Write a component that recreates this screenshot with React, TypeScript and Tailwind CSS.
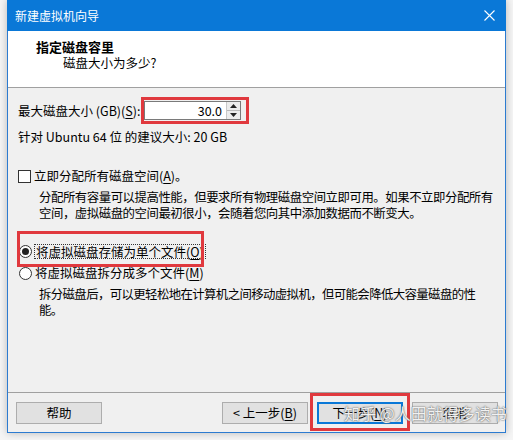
import React from "react";

// access-key letter, underlined like a Win32 dialog
const Key = ({ k }: { k: string }) => (
    <>
        (<span className="underline underline-offset-2">{k}</span>)
    </>
);

const Radio = ({ checked }: { checked?: boolean }) => (
    <span className="w-[13px] h-[13px] rounded-full border border-[#333] bg-white flex items-center justify-center shrink-0">
        {checked && <span className="w-[7px] h-[7px] rounded-full bg-[#222]" />}
    </span>
);

const WinButton = ({ children, primary }: { children: React.ReactNode; primary?: boolean }) => (
    <div
        className={`w-[86px] h-[22px] flex items-center justify-center bg-[#e1e1e1] ${
            primary ? "border-2 border-[#0a78d7]" : "border border-[#adadad]"
        }`}
    >
        {children}
    </div>
);

export default function App() {
    return (
        <div className="w-[513px] h-[440px] bg-[#f5f5f5] pl-[7px] overflow-hidden text-[12.5px] text-black font-['Noto_Sans_CJK_SC',sans-serif]">
            <div className="relative w-[499px] h-[433px] flex flex-col border-x border-b border-[#2c7bd0] bg-[#f0f0f0] shadow-[0_0_8px_rgba(0,0,0,0.25)]">
                {/* Title bar */}
                <div className="h-[31px] bg-[#0a78d7] flex items-center justify-between pl-[8px] pr-[10px] -mx-px">
                    <span className="text-white text-[12px] leading-none">新建虚拟机向导</span>
                    <svg width="11" height="11" viewBox="0 0 11 11" className="mr-[1px]">
                        <path d="M0.5 0.5 L10.5 10.5 M10.5 0.5 L0.5 10.5" stroke="white" strokeWidth="1.1" />
                    </svg>
                </div>

                {/* Header */}
                <div className="h-[57px] bg-white border-b border-[#a0a0a0] pt-[8px] leading-[16px]">
                    <div className="pl-[28px] font-bold text-[13px]">指定磁盘容里</div>
                    <div className="pl-[55px]">磁盘大小为多少?</div>
                </div>

                {/* Body */}
                <div className="flex-1 flex flex-col leading-[16px]">
                    <div className="flex items-center mt-[9px] pl-[10px]">
                        <span className="w-[123px] whitespace-nowrap">
                            最大磁盘大小 (GB)<Key k="S" />:
                        </span>
                        <div className="w-[108px] h-[27px] border-[3px] border-[#e0393e] pr-[5px] py-[1px]">
                            <div className="h-full flex border border-[#7a7a7a] bg-white">
                                <div className="flex-1 flex items-center justify-end pr-[4px]">30.0</div>
                                <div className="w-[14px] flex flex-col border-l border-[#c8c8c8]">
                                    <div className="flex-1 bg-[#ececec] border-b border-[#b8b8b8] flex items-center justify-center">
                                        <svg width="7" height="4" viewBox="0 0 7 4">
                                            <path d="M0 4 L3.5 0 L7 4 Z" fill="#222" />
                                        </svg>
                                    </div>
                                    <div className="flex-1 bg-[#ececec] flex items-center justify-center">
                                        <svg width="7" height="4" viewBox="0 0 7 4">
                                            <path d="M0 0 L3.5 4 L7 0 Z" fill="#222" />
                                        </svg>
                                    </div>
                                </div>
                            </div>
                        </div>
                    </div>

                    <div className="mt-[5px] pl-[10px]">针对 Ubuntu 64 位 的建议大小: 20 GB</div>

                    <div className="mt-[23px] pl-[10px] flex items-center gap-[3px] h-[16px]">
                        <span className="w-[13px] h-[13px] border border-[#333] bg-white shrink-0" />
                        <span>
                            立即分配所有磁盘空间<Key k="A" />。
                        </span>
                    </div>
                    <div className="mt-[5px] pl-[31px] text-[12.4px] tracking-[-0.45px] whitespace-nowrap">
                        分配所有容量可以提高性能，但要求所有物理磁盘空间立即可用。如果不立即分配所有
                        <br />
                        空间，虚拟磁盘的空间最初很小，会随着您向其中添加数据而不断变大。
                    </div>

                    <div className="relative mt-[22px] pl-[11px] flex items-center gap-[2px] h-[16px]">
                        <Radio checked />
                        <span className="border border-dotted border-[#333] px-[1px] leading-[13px]">
                            将虚拟磁盘存储为单个文件<Key k="O" />
                        </span>
                        <div className="absolute left-[9px] top-[-12px] w-[187px] h-[36px] border-[3px] border-[#e0393e]" />
                    </div>
                    <div className="mt-[6px] pl-[11px] flex items-center gap-[3px] h-[16px]">
                        <Radio />
                        <span>
                            将虚拟磁盘拆分成多个文件<Key k="M" />
                        </span>
                    </div>
                    <div className="mt-[5px] pl-[31px] text-[12.4px] tracking-[-0.6px] whitespace-nowrap">
                        拆分磁盘后，可以更轻松地在计算机之间移动虚拟机，但可能会降低大容量磁盘的性
                        <br />
                        能。
                    </div>
                </div>

                {/* Footer */}
                <div className="h-[40px] border-t border-[#a0a0a0] flex items-start pt-[9px] pl-[8px] pr-[7px]">
                    <WinButton>帮助</WinButton>
                    <div className="flex-1" />
                    <div className="flex gap-[9px]">
                        <WinButton>
                            &lt; 上一步<Key k="B" />
                        </WinButton>
                        <div className="relative">
                            <WinButton primary>
                                下一步<Key k="N" />
                            </WinButton>
                            <div className="absolute left-[-7px] top-[-9px] w-[100px] h-[38px] border-[3px] border-[#e0393e]" />
                        </div>
                        <WinButton>取消</WinButton>
                    </div>
                </div>

                {/* watermark */}
                <div className="absolute left-[336px] top-[403px] text-[16px] leading-[20px] text-white/90 [text-shadow:0_0_2px_#666,0_0_1px_#666] whitespace-nowrap">
                    知乎 @人田就得多读书
                </div>
            </div>
        </div>
    );
}
